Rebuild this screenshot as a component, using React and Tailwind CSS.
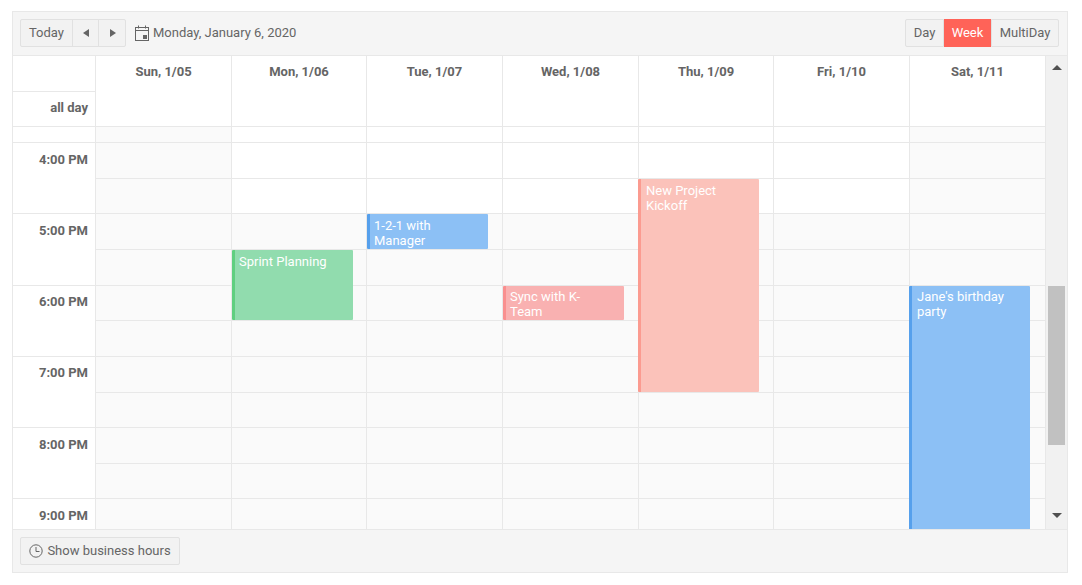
const days = ['Sun, 1/05', 'Mon, 1/06', 'Tue, 1/07', 'Wed, 1/08', 'Thu, 1/09', 'Fri, 1/10', 'Sat, 1/11'];
const hours = ['4:00 PM', '5:00 PM', '6:00 PM', '7:00 PM', '8:00 PM', '9:00 PM'];

// first slot is the tail of the 3:30 row, the rest are half hours from 4:00 PM
const slots = [0, 1, 2, 3, 4, 5, 6, 7, 8, 9, 10, 11];

const events = {
  1: [{ title: 'Sprint Planning', className: 'left-0 top-[123px] h-[70px] pt-[4px] pl-[4px] bg-[#91dcae] border-[#5fcf80]' }],
  2: [{ title: '1-2-1 with Manager', className: 'left-0 top-[87px] h-[35px] pt-[4px] pl-[4px] bg-[#8cc0f5] border-[#56a0ec]' }],
  3: [{ title: 'Sync with K-Team', className: 'left-0 top-[159px] h-[34px] pt-[3px] pl-[4px] bg-[#f9b1b1] border-[#f98f8f]' }],
  4: [{ title: 'New Project Kickoff', className: '-left-px top-[52px] h-[213px] pt-[4px] pl-[5px] bg-[#fbc2ba] border-[#fb9b90]' }],
  6: [{ title: "Jane's birthday party", className: '-left-px top-[159px] h-[300px] pt-[3px] pl-[5px] bg-[#8cc0f5] border-[#56a0ec]' }],
};

const btn = 'h-[28px] flex items-center justify-center bg-[#f2f2f2] border border-[#e1e1e1] text-[#656565]';
const columns = 'grid grid-cols-[136px_135px_136px_136px_135px_136px_136px] w-[950px] shrink-0';

const CalendarIcon = () => (
  <svg width="15" height="17" viewBox="0 0 15 17" fill="none" className="shrink-0">
    <rect x="0.5" y="2.5" width="13" height="13" stroke="#656565" />
    <path d="M1 5.5h12" stroke="#656565" />
    <path d="M3.5 0.5v3M10.5 0.5v3" stroke="#656565" />
    <rect x="8" y="10" width="4" height="4" fill="#656565" />
  </svg>
);

const ClockIcon = () => (
  <svg width="14" height="14" viewBox="0 0 14 14" fill="none" className="shrink-0">
    <circle cx="7" cy="7" r="6.2" stroke="#656565" />
    <path d="M7 3v4.5h3.5" stroke="#656565" />
  </svg>
);

const DayCell = ({ day, slot }) => {
  const isBusiness = day > 0 && day < 6 && slot < 3;
  return (
    <div
      className={`${slot === 0 ? 'h-[16.05px]' : 'h-[35.645px]'} shrink-0 border-b border-[#e8e8e8] ${
        isBusiness ? 'bg-white' : 'bg-[#fafafa]'
      }`}
    />
  );
};

const Event = ({ title, className }) => (
  <div
    className={`absolute w-[121px] z-10 border-l-[3px] rounded-[1px] pr-[16px] text-white text-[13px] leading-[15px] ${className}`}
  >
    {title}
  </div>
);

export default function App() {
  return (
    <div className="h-[585px] w-[1082px] bg-white pt-[11px] pl-[12px] overflow-hidden font-['Roboto',sans-serif] text-[13px] text-[#656565]">
      <div className="w-[1056px] h-[562px] border border-[#e8e8e8] flex flex-col">
        {/* Toolbar */}
        <div className="h-[44px] shrink-0 flex items-center justify-between pl-[7px] pr-[8px] pb-px bg-[#f5f5f5] border-b border-[#e8e8e8]">
          <div className="flex items-center">
            <button className={`${btn} w-[53px] rounded-l-[2px]`}>Today</button>
            <button className={`${btn} w-[27px] -ml-px`}>
              <svg width="6" height="8" viewBox="0 0 6 8"><path d="M6 0v8L0 4z" fill="#656565" /></svg>
            </button>
            <button className={`${btn} w-[28px] -ml-px pl-px rounded-r-[2px]`}>
              <svg width="6" height="8" viewBox="0 0 6 8"><path d="M0 0v8l6-4z" fill="#656565" /></svg>
            </button>
            <div className="flex items-center gap-[3px] ml-[9px]">
              <CalendarIcon />
              <span>Monday, January 6, 2020</span>
            </div>
          </div>
          <div className="flex items-center">
            <button className={`${btn} w-[39px] rounded-l-[2px]`}>Day</button>
            <button className="h-[28px] w-[47px] flex items-center justify-center bg-[#ff6358] text-white">
              Week
            </button>
            <button className={`${btn} w-[68px] rounded-r-[2px]`}>MultiDay</button>
          </div>
        </div>

        {/* Scheduler */}
        <div className="flex flex-1 min-h-0">
          <div className="w-[1033px] flex flex-col">
            <div className="h-[71px] shrink-0 flex border-b border-[#e8e8e8] bg-white">
              <div className="w-[83px] shrink-0 border-r border-[#e8e8e8] flex flex-col">
                <div className="h-[36px] border-b border-[#e8e8e8]" />
                <div className="flex-1 pt-[8px] pr-[7px] text-right leading-[16px] font-bold">all day</div>
              </div>
              <div className={columns}>
                {days.map((day) => (
                  <div key={day} className="border-r border-[#e8e8e8] pt-[8px] text-center leading-[16px] font-bold">
                    {day}
                  </div>
                ))}
              </div>
            </div>

            <div className="flex flex-1 min-h-0 overflow-hidden">
              <div className="w-[83px] shrink-0 border-r border-[#e8e8e8] bg-white">
                <div className="h-[16px] border-b border-[#e8e8e8]" />
                {hours.map((hour) => (
                  <div key={hour} className="h-[71.29px] border-b border-[#e8e8e8] pt-[8.5px] pr-[7px] text-right leading-[16px] font-bold">
                    {hour}
                  </div>
                ))}
              </div>
              <div className={columns}>
                {days.map((day, i) => (
                  <div key={day} className="relative border-r border-[#e8e8e8]">
                    {slots.map((slot) => (
                      <DayCell key={slot} day={i} slot={slot} />
                    ))}
                    {(events[i] || []).map((ev) => (
                      <Event key={ev.title} title={ev.title} className={ev.className} />
                    ))}
                  </div>
                ))}
              </div>
            </div>
          </div>

          {/* Scrollbar */}
          <div className="w-[21px] shrink-0 bg-[#f1f1f1] flex flex-col items-center">
            <div className="h-[23px] shrink-0 flex items-center justify-center">
              <svg width="10" height="5" viewBox="0 0 10 5"><path d="M5 0l5 5H0z" fill="#505050" /></svg>
            </div>
            <div className="w-[17px] h-[159px] mt-[207px] shrink-0 bg-[#c1c1c1]" />
            <div className="mt-auto h-[28px] shrink-0 flex items-center justify-center">
              <svg width="10" height="5" viewBox="0 0 10 5"><path d="M0 0h10L5 5z" fill="#505050" /></svg>
            </div>
          </div>
        </div>

        {/* Footer */}
        <div className="h-[43px] shrink-0 flex items-center pl-[7px] bg-[#f5f5f5] border-t border-[#e8e8e8]">
          <button className={`${btn} w-[160px] gap-[4px] rounded-[2px]`}>
            <ClockIcon />
            <span>Show business hours</span>
          </button>
        </div>
      </div>
    </div>
  );
}
